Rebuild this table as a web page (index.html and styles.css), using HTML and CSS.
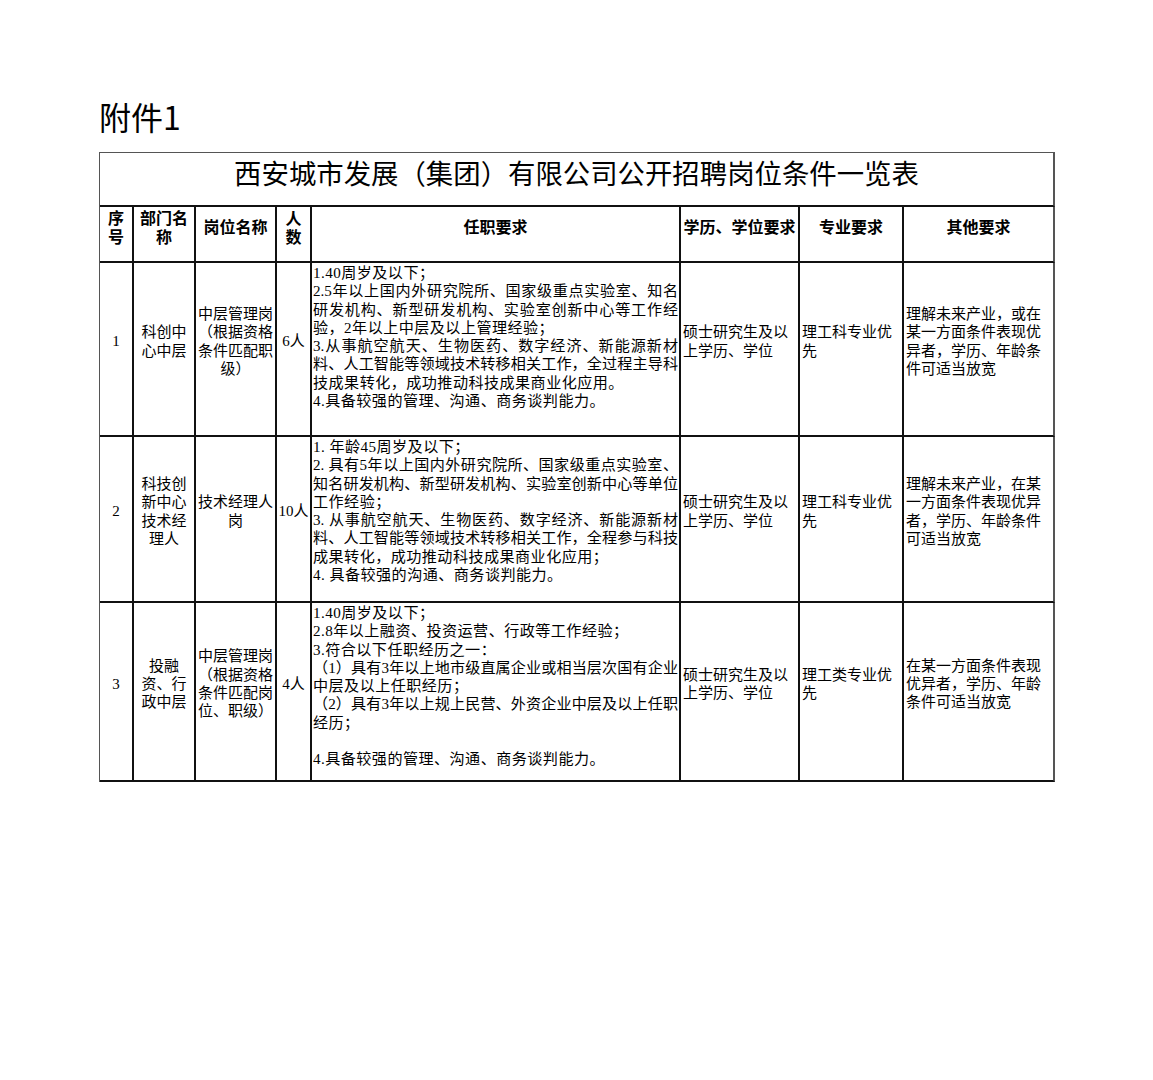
FILE: index.html
```html
<!DOCTYPE html>
<html lang="zh-CN">
<head>
<meta charset="utf-8">
<title>附件1</title>
<link rel="stylesheet" href="styles.css">
</head>
<body>
<div class="page">
  <h1 class="annex">附件1</h1>
  <div class="sheet">
    <div class="cell caption">西安城市发展（集团）有限公司公开招聘岗位条件一览表</div>

    <div class="cell hd">序<br>号</div>
    <div class="cell hd">部门名<br>称</div>
    <div class="cell hd">岗位名称</div>
    <div class="cell hd">人<br>数</div>
    <div class="cell hd">任职要求</div>
    <div class="cell hd">学历、学位要求</div>
    <div class="cell hd">专业要求</div>
    <div class="cell hd last">其他要求</div>

    <div class="cell c">1</div>
    <div class="cell c">科创中<br>心中层</div>
    <div class="cell c">中层管理岗<br>（根据资格<br>条件匹配职<br>级）</div>
    <div class="cell c">6人</div>
    <div class="cell req">
      <div>1.40周岁及以下；</div>
      <div class="jl">2.5年以上国内外研究院所、国家级重点实验室、知名</div>
      <div class="jl">研发机构、新型研发机构、实验室创新中心等工作经</div>
      <div>验，2年以上中层及以上管理经验；</div>
      <div class="jl">3.从事航空航天、生物医药、数字经济、新能源新材</div>
      <div class="jl">料、人工智能等领域技术转移相关工作，全过程主导科</div>
      <div>技成果转化，成功推动科技成果商业化应用。</div>
      <div>4.具备较强的管理、沟通、商务谈判能力。</div>
    </div>
    <div class="cell l">硕士研究生及以<br>上学历、学位</div>
    <div class="cell l">理工科专业优<br>先</div>
    <div class="cell l last">理解未来产业，或在<br>某一方面条件表现优<br>异者，学历、年龄条<br>件可适当放宽</div>

    <div class="cell c">2</div>
    <div class="cell c">科技创<br>新中心<br>技术经<br>理人</div>
    <div class="cell c">技术经理人<br>岗</div>
    <div class="cell c">10人</div>
    <div class="cell req">
      <div>1. 年龄45周岁及以下；</div>
      <div class="jl">2. 具有5年以上国内外研究院所、国家级重点实验室、</div>
      <div class="jl">知名研发机构、新型研发机构、实验室创新中心等单位</div>
      <div>工作经验；</div>
      <div class="jl">3. 从事航空航天、生物医药、数字经济、新能源新材</div>
      <div class="jl">料、人工智能等领域技术转移相关工作，全程参与科技</div>
      <div>成果转化，成功推动科技成果商业化应用；</div>
      <div>4. 具备较强的沟通、商务谈判能力。</div>
    </div>
    <div class="cell l">硕士研究生及以<br>上学历、学位</div>
    <div class="cell l">理工科专业优<br>先</div>
    <div class="cell l last">理解未来产业，在某<br>一方面条件表现优异<br>者，学历、年龄条件<br>可适当放宽</div>

    <div class="cell c">3</div>
    <div class="cell c">投融<br>资、行<br>政中层</div>
    <div class="cell c">中层管理岗<br>（根据资格<br>条件匹配岗<br>位、职级）</div>
    <div class="cell c">4人</div>
    <div class="cell req">
      <div>1.40周岁及以下；</div>
      <div>2.8年以上融资、投资运营、行政等工作经验；</div>
      <div>3.符合以下任职经历之一：</div>
      <div class="jl">（1）具有3年以上地市级直属企业或相当层次国有企业</div>
      <div>中层及以上任职经历；</div>
      <div class="jl">（2）具有3年以上规上民营、外资企业中层及以上任职</div>
      <div>经历；</div>
      <div class="blank"></div>
      <div>4.具备较强的管理、沟通、商务谈判能力。</div>
    </div>
    <div class="cell l">硕士研究生及以<br>上学历、学位</div>
    <div class="cell l">理工类专业优<br>先</div>
    <div class="cell l last">在某一方面条件表现<br>优异者，学历、年龄<br>条件可适当放宽</div>
  </div>
</div>
</body>
</html>
```

FILE: styles.css
```css
html, body {
  margin: 0;
  padding: 0;
  background: #ffffff;
  color: #000000;
}

.page {
  padding: 97px 0 0 99px;
}

.annex {
  margin: 0 0 17px 0;
  font-family: "Noto Sans CJK SC", "Noto Sans", sans-serif;
  font-weight: 400;
  font-size: 32px;
  line-height: 38px;
}

.sheet {
  display: grid;
  width: max-content;
  grid-template-columns: 34px 62px 81px 35px 369px 119px 104px 151px;
  grid-template-rows: 54px 56px 174px 166px 179px;
  border-top: 1px solid #555555;
  border-left: 1px solid #555555;
  font-family: "Liberation Serif", "Noto Sans CJK SC", serif;
  font-size: 15px;
  line-height: 18.3px;
}

.cell {
  box-sizing: border-box;
  border-right: 2px solid #111111;
  border-bottom: 2px solid #111111;
  min-width: 0;
}

.cell.last {
  border-right-color: #555555;
}

.caption {
  grid-column: 1 / -1;
  display: flex;
  align-items: center;
  justify-content: center;
  padding-bottom: 15px;
  font-family: "Noto Sans CJK SC", sans-serif;
  font-size: 27.4px;
  line-height: 32px;
  border-right-color: #555555;
}

.hd {
  display: flex;
  flex-direction: column;
  justify-content: center;
  align-items: center;
  text-align: center;
  padding-bottom: 15px;
  font-family: "Noto Sans CJK SC", sans-serif;
  font-weight: 700;
  font-size: 16px;
  line-height: 18.5px;
  white-space: nowrap;
}

.c {
  display: flex;
  flex-direction: column;
  justify-content: center;
  align-items: center;
  text-align: center;
  padding-bottom: 15px;
  white-space: nowrap;
}

.l {
  display: flex;
  flex-direction: column;
  justify-content: center;
  align-items: flex-start;
  text-align: left;
  padding: 0 0 15px 2px;
  white-space: nowrap;
}

.req {
  padding: 1px 1px 0 1px;
  font-size: 15.1px;
  line-height: 18.3px;
  letter-spacing: 0.45px;
  white-space: nowrap;
}

.req .jl {
  letter-spacing: 0;
  text-align: justify;
  text-align-last: justify;
  white-space: normal;
}

.req .blank {
  height: 18.3px;
}
```
